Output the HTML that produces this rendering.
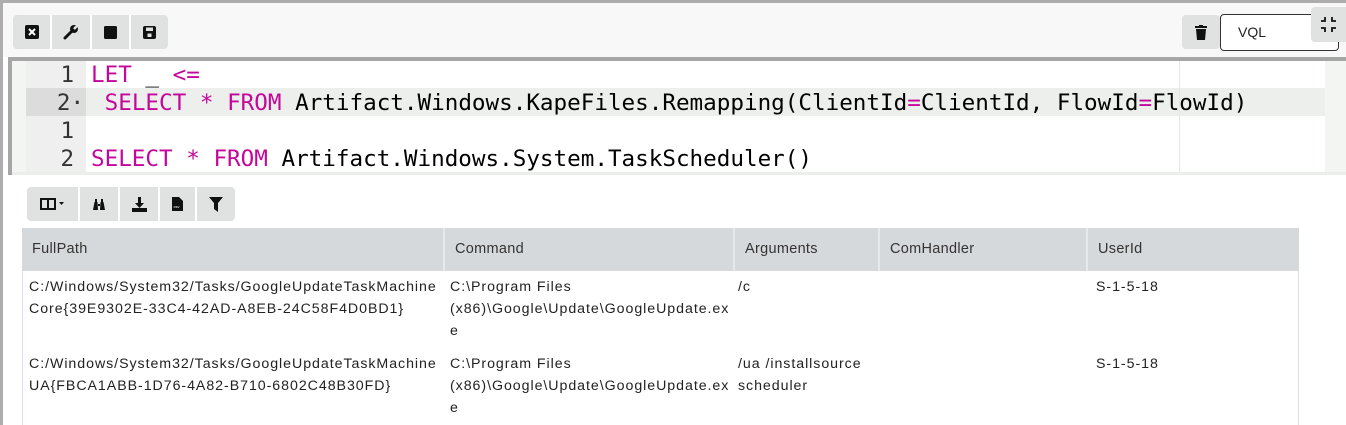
<!DOCTYPE html>
<html><head><style>
body{margin:0;width:1346px;height:425px;overflow:hidden;background:#fff;position:relative;font-family:"Liberation Sans",sans-serif;}
.a{position:absolute}
.tb{position:absolute;background:#dfe2e0;border-radius:4px;height:34px;display:flex}
.tb div{width:39px;height:34px;border-right:2px solid #fff;display:flex;align-items:center;justify-content:center}
.tb div:last-child{border-right:none}
.code{position:absolute;left:91px;font-family:"DejaVu Sans Mono","Liberation Mono",monospace;font-size:22.6px;line-height:28px;white-space:pre;color:#000}
.k{color:#c5069b}
.ln{position:absolute;width:48px;text-align:right;font-family:"DejaVu Sans Mono",monospace;font-size:22.5px;line-height:28px;color:#333;left:26px}
.th{position:absolute;top:228px;height:43px;line-height:43px;font-size:14.5px;color:#333;padding-left:10px;box-sizing:border-box;border-right:2px solid #e6e8ea;letter-spacing:0.3px}
.td{position:absolute;font-size:14.2px;line-height:22px;color:#222;letter-spacing:0.95px;white-space:nowrap}
</style></head><body>
<div class="a" style="left:0;top:0;width:1346px;height:3px;background:#adadad"></div>
<div class="a" style="left:0;top:0;width:3px;height:425px;background:#adadad"></div>
<div class="a" style="left:3px;top:3px;width:1343px;height:54px;background:#f7f8f7"></div>
<div class="tb" style="left:13px;top:15px;width:155px">
<div><svg width="14" height="14"><rect x="0" y="0" width="14" height="14" rx="2" fill="#111"/><path d="M4 4l6 6M10 4l-6 6" stroke="#fff" stroke-width="2"/></svg></div>
<div><svg width="16" height="16"><path d="M2 14l7-7" stroke="#111" stroke-width="3" stroke-linecap="round"/><circle cx="11" cy="5" r="4" fill="#111"/><path d="M11 5l3-3" stroke="#dfe2e0" stroke-width="2.5"/></svg></div>
<div><svg width="13" height="13"><rect width="13" height="13" rx="1.5" fill="#111"/></svg></div>
<div><svg width="13" height="13"><rect width="13" height="13" rx="2" fill="#111"/><rect x="3" y="1.5" width="7" height="3.5" fill="#dfe2e0"/><rect x="4.5" y="7.5" width="4" height="3.5" fill="#dfe2e0"/></svg></div>
</div>
<div class="tb" style="left:1182px;top:15px;width:38px"><div><svg width="12" height="15"><rect x="0" y="1" width="12" height="2" fill="#111"/><rect x="4" y="0" width="4" height="2" fill="#111"/><path d="M1 4h10l-1 11H2z" fill="#111"/></svg></div></div>
<div class="a" style="left:1220px;top:14px;width:119px;height:37px;border:1px solid #333;border-radius:4px;background:#fff;box-sizing:border-box;font-size:14px;line-height:35px;padding-left:17px;color:#222">VQL</div>
<div class="a" style="left:1311px;top:7px;width:35px;height:35px;background:#dfe2e0;border-radius:4px 0 0 4px"><svg width="35" height="35"><path d="M14 10v4h-4M21 10v4h4M14 25v-4h-4M21 25v-4h4" stroke="#111" stroke-width="1.8" fill="none"/></svg></div>
<div class="a" style="left:8px;top:57px;width:1338px;height:4px;background:#a6a6a6"></div>
<div class="a" style="left:8px;top:57px;width:4px;height:118px;background:#a6a6a6"></div>
<div class="a" style="left:12px;top:61px;width:1334px;height:111px;background:#fff"></div>
<div class="a" style="left:12px;top:61px;width:14px;height:111px;background:#f3f5f3"></div>
<div class="a" style="left:26px;top:61px;width:60px;height:111px;background:#eeefee"></div>
<div class="a" style="left:1325px;top:61px;width:21px;height:111px;background:#f3f5f3"></div>
<div class="a" style="left:12px;top:172px;width:1334px;height:3px;background:#eceeec"></div>
<div class="a" style="left:26px;top:88px;width:60px;height:28px;background:#dcdcdc"></div>
<div class="a" style="left:86px;top:88px;width:1239px;height:28px;background:#ecefec"></div>
<div class="a" style="left:1179px;top:61px;width:1px;height:111px;background:#e6e6e6"></div>
<div class="ln" style="top:61px">1</div>
<div class="ln" style="top:89px;width:58px">2·</div>
<div class="ln" style="top:117px">1</div>
<div class="ln" style="top:145px">2</div>
<div class="code" style="top:61px"><span class="k">LET</span> _ <span class="k">&lt;=</span></div>
<div class="code" style="top:89px"> <span class="k">SELECT</span> <span class="k">*</span> <span class="k">FROM</span> Artifact.Windows.KapeFiles.Remapping(ClientId<span class="k">=</span>ClientId, FlowId<span class="k">=</span>FlowId)</div>
<div class="code" style="top:145px"><span class="k">SELECT</span> <span class="k">*</span> <span class="k">FROM</span> Artifact.Windows.System.TaskScheduler()</div>
<div class="tb" style="left:27px;top:187px;width:208px">
<div style="width:52px"><svg width="24" height="12"><rect x="1" y="1" width="14" height="10" fill="none" stroke="#111" stroke-width="2"/><path d="M8 1v10" stroke="#111" stroke-width="2"/><path d="M19 4h5l-2.5 3z" fill="#111"/></svg></div>
<div><svg width="14" height="13"><path d="M1 12l1.5-8h3l.5 8zM13 12l-1.5-8h-3l-.5 8zM3 1h2v3H3zM9 1h2v3H9zM6 6h2v2H6z" fill="#111"/></svg></div>
<div><svg width="15" height="15"><path d="M6 0h3v6h3l-4.5 5L3 6h3z" fill="#111"/><rect x="0" y="11" width="15" height="4" fill="#111"/></svg></div>
<div style="width:35px"><svg width="11" height="14"><path d="M0 0h7l4 4v10H0z" fill="#111"/><text x="1.5" y="11" font-size="4" fill="#fff" font-family="Liberation Sans">csv</text></svg></div>
<div><svg width="14" height="15"><path d="M0 0h14l-5 6v9l-4-3V6z" fill="#111"/></svg></div>
</div>
<div class="a" style="left:22px;top:228px;width:1277px;height:197px;border-left:1px solid #dde;border-right:1px solid #dde;box-sizing:border-box"></div>
<div class="a" style="left:22px;top:228px;width:1277px;height:43px;background:#d6d9dc"></div>
<div class="th" style="left:22px;width:423px">FullPath</div>
<div class="th" style="left:445px;width:290px">Command</div>
<div class="th" style="left:735px;width:145px">Arguments</div>
<div class="th" style="left:880px;width:208px">ComHandler</div>
<div class="th" style="left:1088px;width:211px;border-right:none">UserId</div>
<div class="td" style="left:29px;top:276px">C:/Windows/System32/Tasks/GoogleUpdateTaskMachine<br>Core{39E9302E-33C4-42AD-A8EB-24C58F4D0BD1}</div>
<div class="td" style="left:450px;top:276px">C:\Program Files<br>(x86)\Google\Update\GoogleUpdate.ex<br>e</div>
<div class="td" style="left:738px;top:276px">/c</div>
<div class="td" style="left:1096px;top:276px">S-1-5-18</div>
<div class="td" style="left:29px;top:353px">C:/Windows/System32/Tasks/GoogleUpdateTaskMachine<br>UA{FBCA1ABB-1D76-4A82-B710-6802C48B30FD}</div>
<div class="td" style="left:450px;top:353px">C:\Program Files<br>(x86)\Google\Update\GoogleUpdate.ex<br>e</div>
<div class="td" style="left:738px;top:353px">/ua /installsource<br>scheduler</div>
<div class="td" style="left:1096px;top:353px">S-1-5-18</div>
</body></html>
